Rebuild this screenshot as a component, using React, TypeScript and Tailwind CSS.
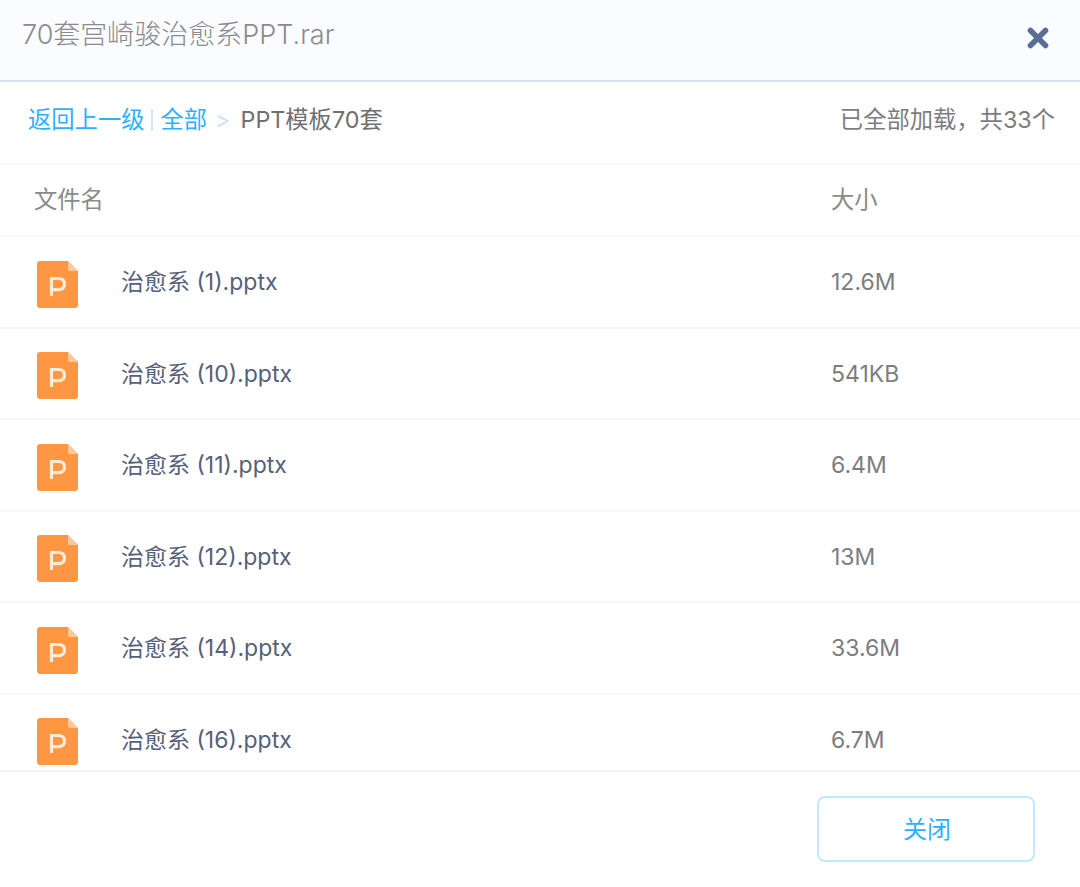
import { X } from "lucide-react";

const font = { fontFamily: 'Inter, "Noto Sans CJK SC", sans-serif' };

const files = [
  { name: "治愈系 (1).pptx", size: "12.6M" },
  { name: "治愈系 (10).pptx", size: "541KB" },
  { name: "治愈系 (11).pptx", size: "6.4M" },
  { name: "治愈系 (12).pptx", size: "13M" },
  { name: "治愈系 (14).pptx", size: "33.6M" },
  { name: "治愈系 (16).pptx", size: "6.7M" },
];

function PptIcon() {
  return (
    <svg width="41" height="47" viewBox="0 0 41 47" className="shrink-0">
      <path
        d="M3 0H31L41 10V44C41 45.7 39.7 47 38 47H3C1.3 47 0 45.7 0 44V3C0 1.3 1.3 0 3 0Z"
        fill="#FF9642"
      />
      <path d="M31 0L41 10H33C31.9 10 31 9.1 31 8V0Z" fill="#FFC89A" />
      <path
        d="M14.5 35V17.5H21.5C25.4 17.5 27.5 19.6 27.5 23C27.5 26.4 25.4 28.6 21.5 28.6H14.5"
        fill="none"
        stroke="#FFEBDA"
        strokeWidth="3.2"
      />
    </svg>
  );
}

export default function App() {
  return (
    <div className="w-[1080px] h-[887px] bg-white flex flex-col overflow-hidden" style={font}>
      {/* header */}
      <div className="h-[82px] shrink-0 bg-[#fbfcff] border-b-2 border-[#d5e3ec] flex items-start justify-between pl-[22px] pr-[27px]">
        <div className="mt-[17px] text-[27px] leading-[36px] font-light text-[#8b8b8b]">70套宫崎骏治愈系PPT.rar</div>
        <X size={30} strokeWidth={4.5} className="mt-[23px] text-[#5b6f96]" />
      </div>

      {/* breadcrumb */}
      <div className="h-[83px] shrink-0 border-b-2 border-[#f5f8fd] flex items-center justify-between pl-[28px] pr-[25px] pb-[5px] text-[23.3px] leading-[32px]">
        <div className="flex items-center">
          <span className="text-[#2fb0ff]">返回上一级</span>
          <span className="w-[2px] h-[22px] mx-[7px] bg-[#d5e6f8]" />
          <span className="text-[#2fb0ff]">全部</span>
          <span className="ml-[8px] mr-[10px] text-[#cfdff5]">&gt;</span>
          <span className="text-[#6f6f6f]">PPT模板70套</span>
        </div>
        <span className="text-[#7d7d7d]">已全部加载，共33个</span>
      </div>

      {/* column titles */}
      <div className="h-[72px] shrink-0 border-b-2 border-[#f5f8fd] flex items-center pl-[34px] text-[23.3px] text-[#8a8a8a]">
        <span className="w-[797px]">文件名</span>
        <span>大小</span>
      </div>

      {/* file list */}
      <div className="flex-1 min-h-0 overflow-hidden">
        {files.map((file) => (
          <div key={file.name} className="h-[91.5px] border-b-2 border-[#f5f8fd] flex items-center pl-[37px] pt-[5px]">
            <PptIcon />
            <span className="w-[710px] ml-[43px] mb-[4px] text-[23px] text-[#56607a]">{file.name}</span>
            <span className="mb-[4px] text-[23px] text-[#7d7d7d]">{file.size}</span>
          </div>
        ))}
      </div>

      {/* footer */}
      <div className="h-[117px] shrink-0 border-t-2 border-[#f2f3f5] flex justify-end pt-[24px] pr-[45px]">
        <button className="w-[218px] h-[66px] pl-[2px] pt-[1px] rounded-[8px] border-2 border-[#bfe9ff] bg-white text-[#2fb0ff] text-[24px]">关闭</button>
      </div>
    </div>
  );
}
